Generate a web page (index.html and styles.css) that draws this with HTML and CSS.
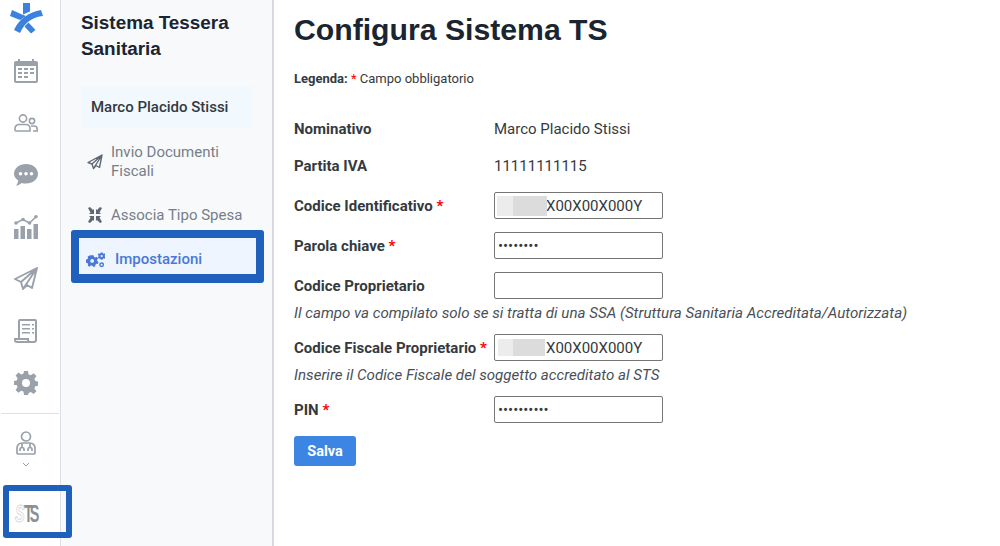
FILE: index.html
```html
<!DOCTYPE html>
<html lang="it">
<head>
  <meta charset="UTF-8">
  <title>Configura Sistema TS</title>
  <link rel="stylesheet" href="styles.css">
</head>
<body>
  <nav class="rail">
    <svg class="rail-logo" viewBox="10 3 33 31"><g fill="#3b82e0"><path d="M23 3h7v8.500l-7 3z"/><path d="M12 10l-2 6 10 4 6-4-4-1.500z"/><path d="M41 10l2 6c-10 1-18 6-23 17l-6-3c5-11 15-18 27-20z"/><path d="M28.500 22.500L35.500 30 31 33.500l-6.500-7z"/></g></svg>
    <svg class="icon" viewBox="0 0 24 24"><path fill="#9aa1ab" fill-rule="evenodd" d="M4 0h2v2h12V0h2v2h2a2 2 0 0 1 2 2v18a2 2 0 0 1-2 2H2a2 2 0 0 1-2-2V4a2 2 0 0 1 2-2h2zM2 7v15h20V7zM4 9h4v2H4zM10 9h4v2h-4zM16 9h4v2h-4zM4 13h4v2H4zM10 13h4v2h-4zM16 13h4v2h-4zM4 17h4v2H4zM10 17h4v2h-4z"/></svg>
    <svg class="icon" viewBox="0 0 24 18"><g fill="none" stroke="#9aa1ab" stroke-width="1.600"><circle cx="9" cy="4.500" r="3.600"/><path d="M1 16v-1.500a4 4 0 0 1 4-4h7a4 4 0 0 1 4 4V17H2a1 1 0 0 1-1-1z"/><circle cx="18" cy="7" r="2.600"/><path d="M17 12h3a3.200 3.200 0 0 1 3.200 3.200V17H19"/></g></svg>
    <svg class="icon" viewBox="0 0 24 24"><path fill="#9aa1ab" fill-rule="evenodd" d="M12 1c6.600 0 12 4.200 12 9.800s-5.400 9.800-12 9.800c-1.600 0-3-.2-4.400-.7C6 21.400 4 22.500 2 22.500c1.300-1.300 2-3 2.200-5C1.600 15.800 0 13.400 0 10.800 0 5.200 5.400 1 12 1zM6.500 9a1.800 1.800 0 1 0 0 3.600 1.800 1.800 0 0 0 0-3.600zM12 9a1.800 1.800 0 1 0 0 3.600A1.800 1.800 0 0 0 12 9zm5.500 0a1.800 1.800 0 1 0 0 3.600 1.800 1.800 0 0 0 0-3.600z"/></svg>
    <svg class="icon" viewBox="0 0 24 24"><g fill="#9aa1ab"><path d="M0 14h4.500v10H0zM6.500 11H11v13H6.500zM13 14h4.500v10H13zM19.500 9H24v15h-4.500z"/><circle cx="2" cy="8" r="1.800"/><circle cx="9" cy="4.500" r="1.800"/><circle cx="15.500" cy="8" r="1.800"/><circle cx="22" cy="1.800" r="1.800"/></g><path fill="none" stroke="#9aa1ab" stroke-width="1.500" d="M2 8l7-3.500 6.500 3.500L22 1.800"/></svg>
    <svg class="icon" viewBox="0 0 24 24"><path fill="none" stroke="#9aa1ab" stroke-width="1.900" stroke-linejoin="round" d="M23 1L1 12l6 3 2 7 4-4 5 3zM23 1L7 15M23 1L9 22"/></svg>
    <svg class="icon" viewBox="0 0 24 24"><path fill="none" stroke="#9aa1ab" stroke-width="2" d="M5 20V2a1 1 0 0 1 1-1h15a1 1 0 0 1 1 1v19a2 2 0 0 1-2 2H3a2 2 0 0 1-2-2v-1h13v1a2 2 0 0 0 2 2"/><path fill="#9aa1ab" d="M8 5h8v1.600H8zM18 5h2v1.600h-2zM8 9h8v1.600H8zM18 9h2v1.600h-2zM8 13h8v1.600H8zM18 13h2v1.600h-2z"/></svg>
    <svg class="icon" viewBox="0 0 24 24"><path fill="#9aa1ab" fill-rule="evenodd" d="M10 0h4l.6 3.400 2.200.9 2.800-2 2.800 2.800-2 2.800.9 2.200 3.400.6v4l-3.400.6-.9 2.200 2 2.800-2.800 2.800-2.800-2-2.200.9L14 24h-4l-.6-3.400-2.200-.9-2.800 2-2.800-2.800 2-2.800-.9-2.200L-.7 14v-4l3.400-.6.9-2.200-2-2.800 2.800-2.800 2.800 2 2.200-.9zM12 8a4 4 0 1 0 0 8 4 4 0 0 0 0-8z"/></svg>
    <hr class="rail-sep">
    <svg class="icon icon-doc" viewBox="0 0 20 24"><g fill="none" stroke="#9aa1ab" stroke-width="1.700"><circle cx="10" cy="5.500" r="4.500"/><path d="M1 22v-5a5 5 0 0 1 5-5h8a5 5 0 0 1 5 5v5a1 1 0 0 1-1 1H2a1 1 0 0 1-1-1z"/><path d="M6 12v5M14 12v5M4 20v-1.500a2 2 0 0 1 4 0V20M12 20v-1.500a2 2 0 0 1 4 0V20"/></g></svg>
    <svg class="chevron" viewBox="0 0 8 5"><path fill="none" stroke="#9aa1ab" d="M1 1l3 3 3-3"/></svg>
    <div class="rail-sts">
      <span class="sts-mark"><span class="sts-s">S</span><span class="sts-ts">TS</span></span>
    </div>
  </nav>

  <aside class="panel">
    <h2 class="panel-title">Sistema Tessera Sanitaria</h2>
    <div class="panel-user">Marco Placido Stissi</div>
    <a class="panel-link">
      <svg class="link-icon" viewBox="0 0 16 16"><path fill="none" stroke="#5f6872" stroke-width="1.400" stroke-linejoin="round" d="M15 1L1 8.500l4 1.500 1.500 4.500 2.500-3 3.500 2zM15 1L5 10M15 1L6.500 14.500"/></svg>
      <span>Invio Documenti Fiscali</span>
    </a>
    <a class="panel-link">
      <svg class="link-icon" viewBox="0 0 16 16"><path fill="#5f6872" d="M1 1l2-1 3 3 1-1v5H2l1.500-1.500zM15 1l-2-1-3 3-1-1v5h5l-1.500-1.500zM1 15l2 1 3-3 1 1V9H2l1.500 1.500zM15 15l-2 1-3-3-1 1V9h5l-1.500 1.500z"/></svg>
      <span>Associa Tipo Spesa</span>
    </a>
    <a class="panel-link panel-link-on">
      <svg class="gear-icon" viewBox="0 0 20 16"><g fill="#4a78d8"><path fill-rule="evenodd" d="M5 3h3l.4 1.600 1.500.7 1.300-.8 1.500 2-1 1.200.2 1.600 1.300.7-.8 2.200-1.600-.2-1.100 1.200.2 1.500-2.400.6-.9-1.400-1.600-.1-1 1.300-2.200-1 .5-1.600-.9-1.300-1.600-.3V7.600l1.600-.4.8-1.300-.5-1.600 2.100-1zM6.500 7a2 2 0 1 0 0 4 2 2 0 0 0 0-4z"/><path fill-rule="evenodd" d="M15.500 0h2l.2 1 1 .5.9-.5 1 1.600-.8.7v1.200l.8.7-1 1.600-.9-.5-1 .5-.2 1h-2l-.2-1-1-.5-.9.5-1-1.600.8-.7V3.300l-.8-.7 1-1.600.9.500 1-.5zm1 2.700a1.200 1.200 0 1 0 0 2.400 1.200 1.200 0 0 0 0-2.400z"/><circle cx="16.500" cy="13" r="2.600"/></g><circle cx="16.500" cy="13" r="1.100" fill="#eef5fe"/></svg>
      <span>Impostazioni</span>
    </a>
  </aside>

  <main class="content">
    <h1 class="page-title">Configura Sistema TS</h1>
    <p class="legend"><b>Legenda:</b> <i class="req">*</i> Campo obbligatorio</p>

    <div class="row row-text"><label>Nominativo</label><span>Marco Placido Stissi</span></div>
    <div class="row row-text row-piva"><label>Partita IVA</label><span>11111111115</span></div>

    <div class="row row-first"><label>Codice Identificativo <i class="req">*</i></label>
      <div class="field"><input class="code" type="text" value="X00X00X000Y"><span class="mask"></span></div>
    </div>
    <div class="row"><label>Parola chiave <i class="req">*</i></label>
      <div class="field"><input type="password" value="12345678"></div>
    </div>
    <div class="row"><label>Codice Proprietario</label>
      <div class="field"><input type="text"></div>
    </div>
    <p class="hint">Il campo va compilato solo se si tratta di una SSA (Struttura Sanitaria Accreditata/Autorizzata)</p>
    <div class="row row-after"><label>Codice Fiscale Proprietario <i class="req">*</i></label>
      <div class="field"><input class="code" type="text" value="X00X00X000Y"><span class="mask mask-low"></span></div>
    </div>
    <p class="hint">Inserire il Codice Fiscale del soggetto accreditato al STS</p>
    <div class="row row-after"><label>PIN <i class="req">*</i></label>
      <div class="field"><input type="password" value="1234567890"></div>
    </div>
    <button class="save">Salva</button>
  </main>
</body>
</html>
```

FILE: styles.css
```css
* {
  box-sizing: border-box;
}
html, body {
  height: 100%;
}
body {
  margin: 0;
  display: flex;
  overflow: hidden;
  font-family: Roboto, sans-serif;
  font-size: 15px;
  color: #343a40;
  background: #fff;
}

.rail {
  width: 61px;
  flex: none;
  border-right: 1px solid #dde0e5;
  display: flex;
  flex-direction: column;
  align-items: center;
  position: relative;
}
.rail-logo {
  width: 33px;
  height: 31px;
  margin: 3px 8px 0 0;
  display: block;
  flex: none;
}
.icon {
  width: 24px;
  height: 24px;
  flex: none;
  margin: 28px 8px 0 0;
}
.rail-logo + .icon {
  margin-top: 25px;
}
.rail-sep {
  width: 58px;
  height: 1px;
  margin: 18px 0 0;
  border: 0;
  background: #dde0e5;
}
.icon-doc {
  margin-top: 17px;
}
.chevron {
  width: 8px;
  height: 5px;
  margin: 7px 8px 0 0;
}
.rail-sts {
  position: absolute;
  left: 3px;
  top: 485px;
  width: 69px;
  height: 53px;
  border: 6px solid #1f60bd;
  border-radius: 3px;
  background: linear-gradient(90deg, #fff 51px, #dde0e5 51px, #dde0e5 52px, #f8f9fb 52px);
  z-index: 2;
}
.sts-mark {
  display: block;
  margin: 10px 0 0 6px;
  font-family: "Liberation Sans", sans-serif;
  font-size: 24px;
  line-height: 25px;
  font-weight: 700;
  white-space: nowrap;
  transform: scaleX(.6);
  transform-origin: left;
}
.sts-s {
  color: #fff;
  font-style: italic;
  letter-spacing: -1px;
  -webkit-text-stroke: 1px #d5d8dc;
}
.sts-ts {
  color: #8a9098;
  letter-spacing: -5px;
}

.panel {
  width: 213px;
  flex: none;
  background: #f8f9fb;
  border-right: 2px solid #d7dae0;
  padding: 10px 20px 0 10px;
}
.panel-title {
  margin: 0 0 24px 10px;
  font-family: "Liberation Sans", sans-serif;
  font-size: 18.900px;
  line-height: 26px;
  font-weight: 700;
  color: #1a2532;
}
.panel-user {
  height: 42px;
  margin-left: 10px;
  padding: 1px 0 0 10px;
  line-height: 41px;
  font-weight: 500;
  color: #343a40;
  background: #f1f8fe;
}
.panel-link {
  display: flex;
  align-items: center;
  margin-left: 16px;
  color: #767e88;
  line-height: 19px;
}
.panel-link:nth-of-type(1) {
  margin-top: 10px;
  height: 48px;
}
.panel-link:nth-of-type(2) {
  margin-top: 17px;
  height: 24px;
}
.link-icon {
  width: 16px;
  height: 16px;
  flex: none;
  margin-right: 8px;
}
.gear-icon {
  width: 19px;
  height: 16px;
  flex: none;
  margin-right: 10px;
}
.panel-link-on {
  width: 193px;
  height: 53px;
  margin: 3px 0 0;
  border: 8px solid #1f60bd;
  border-bottom-width: 9px;
  border-radius: 3px;
  padding: 7px 0 0 7px;
  background: #eef5fe;
  color: #4a78d8;
  font-weight: 500;
}

.content {
  flex: 1;
  padding: 0 20px;
}
.page-title {
  margin: 12px 0 0;
  font-family: "Liberation Sans", sans-serif;
  font-size: 30.200px;
  line-height: 36px;
  font-weight: 700;
  color: #1a2532;
}
.legend {
  margin: 23px 0 0;
  font-size: 13px;
  line-height: 16px;
}
.req {
  color: #f00;
  font-style: normal;
}
.row {
  display: flex;
  align-items: center;
  height: 27px;
  margin-top: 13px;
}
.row label {
  width: 200px;
  flex: none;
  font-weight: 700;
}
.row-text {
  margin-top: 28px;
}
.row-piva {
  margin-top: 10px;
}
.row-first {
  margin-top: 13px;
}
.row-after {
  margin-top: 12px;
}
.field {
  position: relative;
  width: 169px;
  flex: none;
}
.field input {
  display: block;
  width: 100%;
  height: 27px;
  padding: 0 3px;
  border: 1px solid #767676;
  border-radius: 2px;
  font-family: Roboto, sans-serif;
  font-size: 15px;
  color: #343a40;
  outline: none;
}
.field input.code {
  padding-left: 51px;
}
.mask {
  position: absolute;
  left: 3px;
  top: 4px;
  width: 50px;
  height: 20px;
  background: linear-gradient(90deg, #ececec 16px, #dcdcdc 16px);
}
.mask-low {
  left: 4px;
  top: 5px;
  width: 47px;
  height: 17px;
  background: linear-gradient(90deg, #ececec 15px, #dcdcdc 15px);
}
.hint {
  margin: 5px 0 0;
  font-size: 15.120px;
  font-style: italic;
  line-height: 18px;
  color: #4a5058;
}
.save {
  display: block;
  width: 62px;
  height: 30px;
  margin-top: 13px;
  padding: 0;
  border: 0;
  border-radius: 3px;
  background: #3d85e3;
  color: #fff;
  font-family: Roboto, sans-serif;
  font-size: 14.500px;
  font-weight: 700;
}
```
